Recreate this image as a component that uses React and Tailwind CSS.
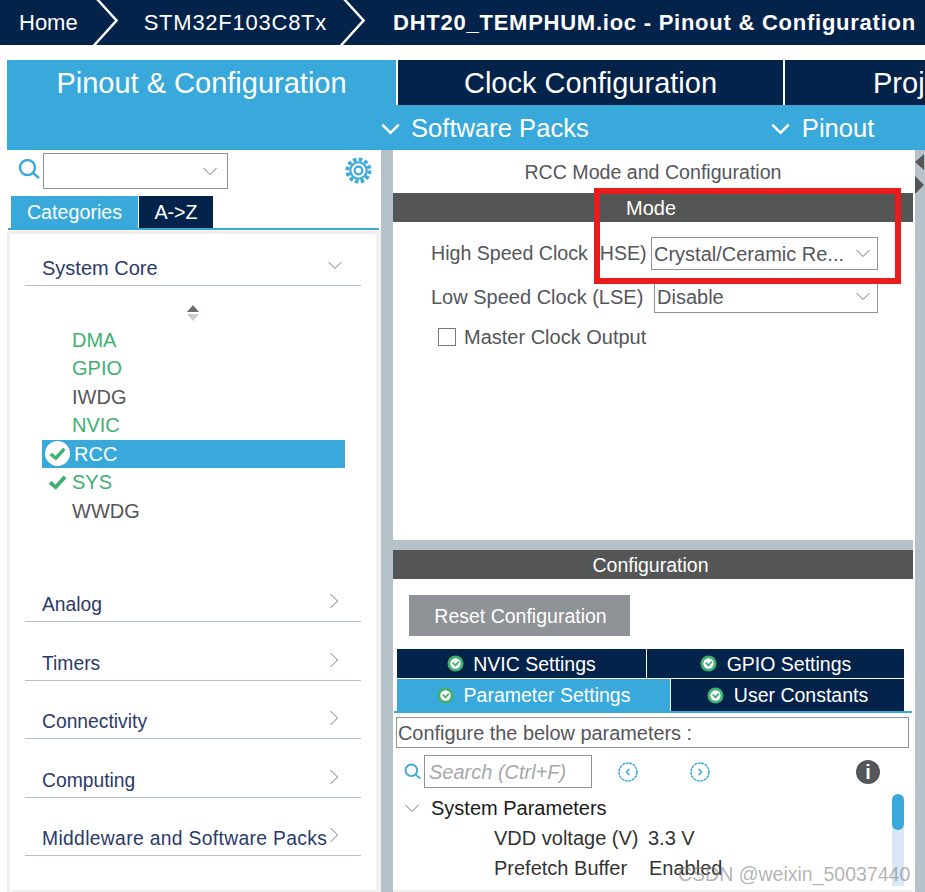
import React from "react";

const font = { fontFamily: '"Liberation Sans", Arial, sans-serif' };

function Chevron({ dir = "down", className = "" }) {
  const d = dir === "down" ? "M1 1 L7.5 7.5 L14 1" : "M1 1 L8 8 L1 15";
  const size = dir === "down" ? "0 0 15 9" : "0 0 9 16";
  return (
    <svg viewBox={size} className={className} fill="none" stroke="currentColor">
      <path d={d} />
    </svg>
  );
}

function Crumb() {
  return (
    <svg viewBox="0 0 26 45" className="w-[26px] h-[45px] shrink-0" fill="none" stroke="white" strokeWidth="2.4">
      <path d="M5 -1 L24.5 20.5 L1.5 46" />
    </svg>
  );
}

function Check({ className = "" }) {
  return (
    <svg viewBox="0 0 20 16" className={className} fill="none" stroke="#3fb070" strokeWidth="4">
      <path d="M2 8 L8 13 L18 2" />
    </svg>
  );
}

function TabCheck() {
  return (
    <svg viewBox="0 0 18 18" className="w-[17px] h-[17px] shrink-0">
      <circle cx="9" cy="9" r="8.5" fill="#3fb070" />
      <circle cx="9" cy="9" r="5.5" fill="white" />
      <path d="M6 8 L9 11 L12.5 7" fill="none" stroke="#3fb070" strokeWidth="1.8" />
    </svg>
  );
}

function Search({ className = "" }) {
  return (
    <svg viewBox="0 0 22 22" className={className} fill="none" stroke="#39a9db" strokeWidth="2.4">
      <circle cx="9.5" cy="9.5" r="7.5" />
      <path d="M15 15 L21 20" />
    </svg>
  );
}

function Gear({ className = "" }) {
  return (
    <svg viewBox="0 0 28 28" className={className} fill="none" stroke="#39a9db">
      <circle cx="14" cy="14" r="11.5" strokeWidth="4" strokeDasharray="3.6 2.42" />
      <circle cx="14" cy="14" r="8.5" strokeWidth="2.2" />
      <circle cx="14" cy="14" r="4" strokeWidth="2.2" />
    </svg>
  );
}

function NavCircle({ left }) {
  return (
    <svg viewBox="0 0 20 20" className="w-[20px] h-[20px]" fill="none" stroke="#39a9db" strokeWidth="1.5">
      <circle cx="10" cy="10" r="9" strokeDasharray="3 0.6" />
      <path d={left ? "M11.5 7 L8.5 10 L11.5 13" : "M8.5 7 L11.5 10 L8.5 13"} />
    </svg>
  );
}

const items = [
  { name: "DMA", color: "text-[#3fb070]" },
  { name: "GPIO", color: "text-[#3fb070]" },
  { name: "IWDG", color: "text-[#54565a]" },
  { name: "NVIC", color: "text-[#3fb070]" },
  { name: "RCC", color: "text-white", active: true },
  { name: "SYS", color: "text-[#3fb070]", check: true },
  { name: "WWDG", color: "text-[#54565a]" },
];

const cats = [
  { name: "Analog", h: "h-[58px]", text: "" },
  { name: "Timers", h: "h-[59px]", text: "" },
  { name: "Connectivity", h: "h-[58px]", text: "" },
  { name: "Computing", h: "h-[59px]", text: "" },
  { name: "Middleware and Software Packs", h: "h-[58px]", text: "tracking-[0.34px]" },
];

function LeftPanel() {
  return (
    <div className="w-[374px] shrink-0 flex flex-col">
      <div className="h-[46px] flex items-start pl-[11px] pr-[9px] pt-[3px]">
        <Search className="w-[22px] h-[22px] mr-[3px] shrink-0 mt-[5px]" />
        <div className="w-[185px] h-[36px] border border-[#8f9296] flex items-center justify-end pr-[9px] text-[#75787c]">
          <Chevron className="w-[16px] h-[9px]" />
        </div>
        <Gear className="w-[27px] h-[27px] ml-auto mt-[4px]" />
      </div>
      <div className="h-[32px] flex pl-[4px] text-[19.7px]">
        <div className="w-[127px] bg-[#39a9db] text-white flex items-center justify-center pt-[2px]">Categories</div>
        <div className="w-[74px] ml-px bg-[#03234b] text-white flex items-center justify-center pt-[2px]">A-&gt;Z</div>
      </div>
      <div className="h-[3px] w-[371px] ml-px border-t-2 border-[#39a9db]" />
      <div className="flex-1 bg-white border-x-[3px] border-y-[3px] border-[#f0f0f0] border-r-[5px] border-b-2 pl-[15px] pr-[15px]">
        <div className="h-[49px] border-b border-[#b6c2c9] flex items-end justify-between pb-[2px] pl-[17px] pr-[18px] text-[20px] text-[#2b3a6b] mt-[3px]">
          <span>System Core</span>
          <Chevron className="w-[16px] h-[9px] text-[#75787c] mb-[13px]" />
        </div>
        <div className="flex justify-center mt-[19px] h-[20px]">
          <svg viewBox="0 0 12 16" className="w-[12px] h-[16px]">
            <path d="M6 0 L12 7 L0 7 Z" fill="#6b6e72" />
            <path d="M0 9 L12 9 L6 16 Z" fill="#c9cbcd" />
          </svg>
        </div>
        <div className="mt-[0.5px] ml-[17px] mr-[16px] text-[20px]">
          {items.map((it) => (
            <div
              key={it.name}
              className={`h-[28.5px] flex items-center ${it.active ? "bg-[#39a9db]" : ""} ${it.color}`}
            >
              <span className="w-[30px] flex justify-center shrink-0">
                {it.active && (
                  <span className="w-[25px] h-[25px] rounded-full bg-white flex items-center justify-center">
                    <Check className="w-[17px] h-[14px]" />
                  </span>
                )}
                {it.check && <Check className="w-[19px] h-[15px]" />}
              </span>
              <span className={it.active ? "ml-[2px]" : ""}>{it.name}</span>
            </div>
          ))}
        </div>
        <div className="mt-[38.5px]">
          {cats.map((c) => (
            <div
              key={c.name}
              className={`${c.h} border-b border-[#b6c2c9] flex items-end justify-between pb-px pl-[17px] pr-[22px] text-[19.3px] text-[#2b3a6b]`}
            >
              <span className={`whitespace-nowrap ${c.text}`}>{c.name}</span>
              <Chevron dir="right" className="w-[10px] h-[16px] text-[#75787c] mb-[11px] shrink-0" />
            </div>
          ))}
        </div>
      </div>
    </div>
  );
}

function Select({ value, className = "" }) {
  return (
    <div className={`h-[33px] shrink-0 border border-[#8f9296] flex items-center justify-between pl-[2px] pr-[6px] ${className}`}>
      <span>{value}</span>
      <Chevron className="w-[16px] h-[9px] text-[#75787c]" />
    </div>
  );
}

function ModePanel() {
  return (
    <div className="h-[390px] bg-white flex flex-col text-[20px] text-[#54565a] relative">
      <div className="h-[43px] flex items-center justify-center pt-[2px] text-[19.6px]">RCC Mode and Configuration</div>
      <div className="h-[29px] bg-[#545655] text-white flex items-center pl-[233px]">Mode</div>
      <div className="pl-[38px] pr-[35px] mt-[15px]">
        <div className="flex items-center">
          <span className="flex-1 whitespace-nowrap text-[19.6px]">High Speed Clock (HSE)</span>
          <Select value="Crystal/Ceramic Re..." className="w-[227px]" />
        </div>
        <div className="flex items-center mt-[10px]">
          <span className="flex-1 whitespace-nowrap">Low Speed Clock (LSE)</span>
          <Select value="Disable" className="w-[224px]" />
        </div>
        <div className="flex items-center mt-[9px] ml-[7px]">
          <span className="w-[18px] h-[18px] border border-[#75787c] mr-[8px]" />
          <span>Master Clock Output</span>
        </div>
      </div>
      <div className="absolute left-[201px] top-[38px] w-[307px] h-[96px] border-[6px] border-[#e81c1c]" />
    </div>
  );
}

function ConfigTab({ label, gap, className = "" }) {
  return (
    <div className={`flex items-center justify-center ${gap} ${className}`}>
      <TabCheck />
      <span className="pt-[2px]">{label}</span>
    </div>
  );
}

function ConfigPanel() {
  return (
    <div className="flex-1 bg-white flex flex-col text-[20px] text-[#54565a] relative border-b-2 border-[#f0f0f0]">
      <div className="h-[29px] bg-[#545655] text-white flex items-center justify-center pr-[5px] pt-[2px] text-[19.5px]">Configuration</div>
      <div className="pl-[16px] pt-[16px]">
        <div className="w-[221px] h-[41px] bg-[#8f9296] text-white flex items-center justify-center pl-[2px] pt-[2px] text-[19.5px]">Reset Configuration</div>
      </div>
      <div className="mt-[13px] pl-[4px] pr-[9px] text-white text-[19.5px]">
        <div className="flex h-[29px]">
          <ConfigTab label="NVIC Settings" gap="gap-[9px]" className="w-[249px] bg-[#03234b]" />
          <ConfigTab label="GPIO Settings" gap="gap-[10px]" className="flex-1 ml-px bg-[#03234b]" />
        </div>
        <div className="flex h-[32px] mt-px">
          <ConfigTab label="Parameter Settings" gap="gap-[10px]" className="w-[273px] bg-[#39a9db]" />
          <ConfigTab label="User Constants" gap="gap-[10px]" className="flex-1 ml-px bg-[#03234b]" />
        </div>
      </div>
      <div className="h-[3px] mx-px border-t-2 border-[#39a9db]" />
      <div className="mt-[3px] mx-[3px] mr-[4px] h-[31px] border border-[#8f9296] flex items-center pl-px pt-[2px] text-[19.9px]">Configure the below parameters :</div>
      <div className="relative">
        <div className="flex items-center h-[33px] mt-[7px] pl-[11px]">
          <Search className="w-[17px] h-[17px] mr-[3px]" />
          <div className="w-[168px] h-[33px] border border-[#8f9296] flex items-center pl-[4px] italic text-[#a6a8aa]">Search (Ctrl+F)</div>
          <span className="ml-[26px]"><NavCircle left /></span>
          <span className="ml-[52px]"><NavCircle /></span>
          <span className="ml-[146px] w-[24px] h-[24px] rounded-full bg-[#54565a] text-white text-[20px] font-bold flex items-center justify-center">i</span>
        </div>
        <div className="mt-[5px] pl-[11px] h-[30px] flex items-center text-[#1a1a1a]">
          <Chevron className="w-[16px] h-[9px] text-[#75787c] mr-[11px]" />
          System Parameters
        </div>
        <div className="pl-[101px] h-[30px] flex items-center text-[#333333]">
          <span className="w-[154px]">VDD voltage (V)</span>3.3 V
        </div>
        <div className="pl-[101px] h-[30px] flex items-center text-[#333333]">
          <span className="w-[155px]">Prefetch Buffer</span>Enabled
        </div>
        <div className="absolute left-[499px] top-[46px] w-[12px] h-[92px] bg-[#d8e8f5] rounded-t-[6px]">
          <div className="h-[36px] bg-[#39a9db] rounded-[6px]" />
        </div>
      </div>
    </div>
  );
}

export default function App() {
  return (
    <div className="w-[925px] h-[892px] overflow-hidden bg-white relative flex flex-col" style={font}>
      <div className="h-[45px] bg-[#03234b] text-white text-[22px] flex items-center pl-[19px] whitespace-nowrap">
        <span>Home</span>
        <span className="ml-[14px]"><Crumb /></span>
        <span className="ml-[26px] tracking-[0.75px]">STM32F103C8Tx</span>
        <span className="ml-[12px]"><Crumb /></span>
        <span className="ml-[28px] font-bold tracking-[0.75px]">DHT20_TEMPHUM.ioc - Pinout &amp; Configuration</span>
      </div>
      <div className="mt-[15px] ml-[7px] h-[45px] flex text-[29px] text-white whitespace-nowrap overflow-hidden">
        <div className="w-[389px] shrink-0 bg-[#39a9db] flex items-center justify-center pt-[2px]">Pinout &amp; Configuration</div>
        <div className="w-[385px] shrink-0 ml-[2px] bg-[#03234b] flex items-center justify-center pt-[2px]">Clock Configuration</div>
        <div className="flex-1 ml-[2px] bg-[#03234b] flex items-center pl-[88px] pt-[2px] overflow-hidden">Proj</div>
      </div>
      <div className="ml-[7px] h-[45px] bg-[#39a9db] flex items-center text-white text-[25.6px] whitespace-nowrap pt-[2px]">
        <Chevron className="w-[19px] h-[12px] ml-[374px] stroke-2" />
        <span className="ml-[11px]">Software Packs</span>
        <Chevron className="w-[19px] h-[12px] ml-[182px] stroke-2" />
        <span className="ml-[12px]">Pinout</span>
      </div>
      <div className="flex-1 flex min-h-0 ml-[7px] bg-[#b6c2c9]">
        <div className="bg-white flex"><LeftPanel /></div>
        <div className="ml-[12px] w-[522px] border-r-2 border-white flex flex-col">
          <ModePanel />
          <div className="h-[10px] bg-[#b6c2c9]" />
          <ConfigPanel />
        </div>
        <div className="flex-1 relative">
          <div className="absolute left-0 top-[4px] w-0 h-0 border-y-[8px] border-y-transparent border-r-[9px] border-r-[#54565a]" />
          <div className="absolute left-0 top-[26px] w-0 h-0 border-y-[9px] border-y-transparent border-l-[9px] border-l-[#54565a]" />
        </div>
      </div>
      <div className="absolute left-[678px] top-[860px] text-[19.5px] text-[#80808099] whitespace-nowrap">CSDN @weixin_50037440</div>
    </div>
  );
}
